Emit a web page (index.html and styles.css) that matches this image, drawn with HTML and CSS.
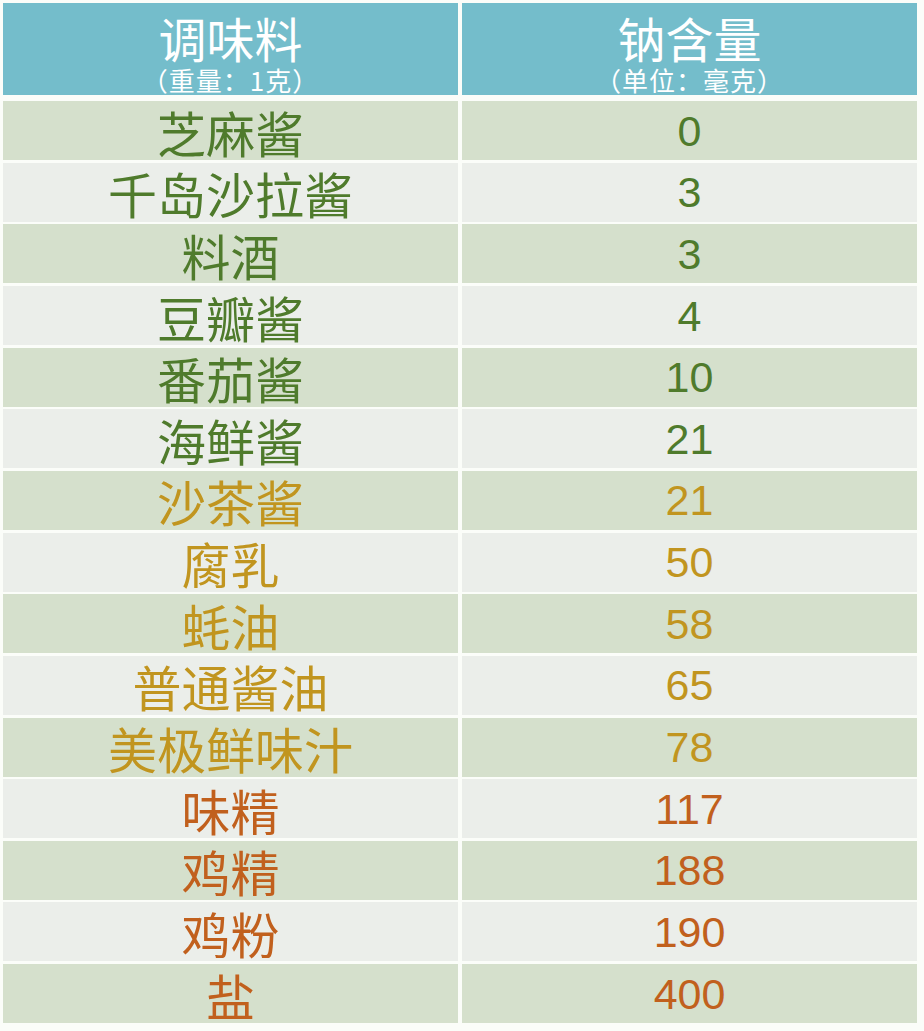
FILE: index.html
```html
<!DOCTYPE html>
<html lang="zh-CN">
<head>
<meta charset="utf-8">
<title>调味料钠含量</title>
<link rel="stylesheet" href="styles.css">
</head>
<body>
<div class="table">
  <div class="head"><div class="title">调味料</div><div class="sub">（重量：1克）</div></div>
  <div class="head"><div class="title">钠含量</div><div class="sub">（单位：毫克）</div></div>

  <div class="cell a g">芝麻酱</div><div class="cell a g num">0</div>
  <div class="cell b g">千岛沙拉酱</div><div class="cell b g num">3</div>
  <div class="cell a g">料酒</div><div class="cell a g num">3</div>
  <div class="cell b g">豆瓣酱</div><div class="cell b g num">4</div>
  <div class="cell a g">番茄酱</div><div class="cell a g num">10</div>
  <div class="cell b g">海鲜酱</div><div class="cell b g num">21</div>
  <div class="cell a y">沙茶酱</div><div class="cell a y num">21</div>
  <div class="cell b y">腐乳</div><div class="cell b y num">50</div>
  <div class="cell a y">蚝油</div><div class="cell a y num">58</div>
  <div class="cell b y">普通酱油</div><div class="cell b y num">65</div>
  <div class="cell a y">美极鲜味汁</div><div class="cell a y num">78</div>
  <div class="cell b o">味精</div><div class="cell b o num">117</div>
  <div class="cell a o">鸡精</div><div class="cell a o num">188</div>
  <div class="cell b o">鸡粉</div><div class="cell b o num">190</div>
  <div class="cell a o">盐</div><div class="cell a o num">400</div>
</div>
</body>
</html>
```
FILE: styles.css
```css
html, body {
  margin: 0;
  padding: 0;
  background: #fbfdf9;
}
body {
  width: 924px;
  height: 1031px;
  overflow: hidden;
  font-family: "Noto Sans CJK SC", "Noto Sans", sans-serif;
}
.table {
  display: grid;
  grid-template-columns: 455px 455px;
  grid-template-rows: 95.5px repeat(15, 59px);
  column-gap: 4px;
  row-gap: 2.65px;
  padding: 3px 0 0 3px;
}
.head {
  background: #74bdcb;
  color: #ffffff;
  height: 92px;
  align-self: start;
  display: flex;
  flex-direction: column;
  align-items: center;
}
.title {
  font-size: 48px;
  line-height: 48px;
  margin-top: 10px;
}
.sub {
  font-size: 26px;
  line-height: 28px;
  margin-top: 5px;
  letter-spacing: 1px;
}
.cell {
  display: flex;
  align-items: center;
  justify-content: center;
  font-size: 49px;
  line-height: 1;
  padding-top: 1px;
  box-sizing: border-box;
}
.cell.a { background: #d5e0cc; }
.cell.b { background: #ebeeea; }
.g { color: #4f7b2c; }
.y { color: #c1951f; }
.o { color: #c1601d; }
.num {
  font-family: "Liberation Sans", Arial, sans-serif;
  font-size: 43px;
  padding-top: 1px;
}
```
